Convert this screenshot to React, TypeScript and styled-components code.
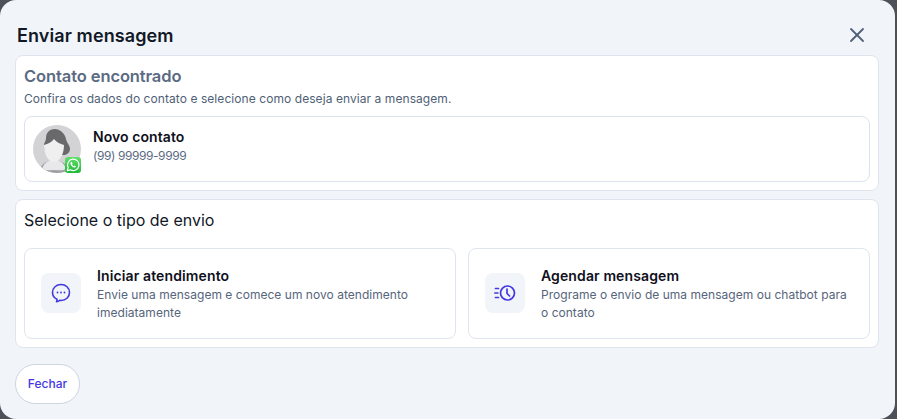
import React from 'react';
import styled, { createGlobalStyle } from 'styled-components';
import { X } from 'lucide-react';

const GlobalStyle = createGlobalStyle`
  html, body {
    margin: 0;
    height: 100%;
    background: #4c5058;
    overflow: hidden;
  }
  * {
    box-sizing: border-box;
  }
`;

const Modal = styled.div`
  width: 895px;
  height: 419px;
  background: #f1f4f9;
  border-radius: 16px;
  padding: 24px 16px 15px 15px;
  display: flex;
  flex-direction: column;
  font-family: 'Inter', 'Noto Sans', sans-serif;
`;

const Header = styled.header`
  height: 31px;
  display: flex;
  justify-content: space-between;
  align-items: flex-start;
  padding: 0 9px 0 2px;
`;

const Title = styled.h2`
  margin: 0;
  font-size: 18px;
  line-height: 23px;
  font-weight: 600;
  color: #111827;
  letter-spacing: 0.1px;
`;

const CloseButton = styled.button`
  border: 0;
  padding: 0;
  margin-right: 1px;
  margin-top: -1px;
  width: 24px;
  height: 24px;
  background: none;
  color: #4f6079;
  display: flex;
`;

const Card = styled.section<{ $height: number }>`
  height: ${p => p.$height}px;
  background: #fff;
  border: 1px solid #dfe5ee;
  border-radius: 8px;
  padding: 8px;
  margin-bottom: 8px;
`;

const CardTitle = styled.h3`
  margin: 1px 0 0;
  font-size: 16.5px;
  line-height: 22px;
  font-weight: 600;
  color: #5b6b82;
  letter-spacing: -0.1px;
`;

const CardText = styled.p`
  margin: 3px 0 0;
  font-size: 12px;
  line-height: 18px;
  color: #4f5f76;
  letter-spacing: 0.07px;
`;

const ContactBox = styled.div`
  height: 66px;
  margin-top: 8px;
  border: 1px solid #dde3ee;
  border-radius: 8px;
  padding: 8px;
  display: flex;
  align-items: center;
  gap: 12px;
`;

const AvatarWrap = styled.div`
  position: relative;
  width: 48px;
  height: 48px;
  flex: none;
`;

const Badge = styled.span`
  position: absolute;
  right: 0;
  bottom: 0;
  width: 16px;
  height: 16px;
  display: block;
`;

const ContactInfo = styled.div`
  margin-bottom: 6px;
`;

const Name = styled.div`
  font-size: 14px;
  line-height: 20px;
  font-weight: 600;
  color: #0f1020;
  letter-spacing: 0.07px;
`;

const Phone = styled.div`
  font-size: 12px;
  line-height: 17px;
  color: #5b6b82;
  letter-spacing: -0.42px;
`;

const SectionTitle = styled.h3`
  margin: 0;
  font-size: 16px;
  line-height: 24px;
  font-weight: 400;
  color: #111827;
`;

const Options = styled.div`
  display: grid;
  grid-template-columns: 432px 402px;
  gap: 12px;
  margin-top: 16px;
`;

const Option = styled.div`
  height: 91px;
  border: 1px solid #dfe5ee;
  border-radius: 8px;
  display: flex;
  align-items: center;
  padding: 0 16px;
  gap: 16px;
`;

const IconBox = styled.div`
  width: 40px;
  height: 40px;
  flex: none;
  border-radius: 8px;
  background: #f1f4f9;
  color: #4338e0;
  display: flex;
  align-items: center;
  justify-content: center;
`;

const OptionBody = styled.div`
  margin-top: 2px;
`;

const OptionTitle = styled.div`
  font-size: 14px;
  line-height: 19px;
  font-weight: 600;
  color: #0f1020;
  letter-spacing: 0.12px;
  margin-bottom: 1px;
`;

const OptionText = styled.div`
  font-size: 12px;
  line-height: 18px;
  color: #56657b;
  letter-spacing: 0.03px;
`;

const CloseAction = styled.button`
  width: 65px;
  height: 41px;
  margin-top: 8px;
  border: 1px solid #cdd5e1;
  border-radius: 21px;
  background: #fff;
  color: #4338e0;
  font: 500 12px 'Inter', sans-serif;
  padding: 0;
`;

function Avatar() {
  return (
    <svg width="48" height="48" viewBox="0 0 48 48">
      <defs>
        <clipPath id="face">
          <circle cx="24" cy="24" r="24" />
        </clipPath>
      </defs>
      <g clipPath="url(#face)">
        <rect width="48" height="48" fill="#d3d3d6" />
        <path d="M6 50c0-9 5-14 15-15 10 1 16 6 16 15z" fill="#9f9fa2" />
        <path d="M9 44c2-6 6-9 12-9s10 3 12 9c-3 2-7 1-12 1s-9 1-12-1z" fill="#e8e8ea" />
        <path d="M22 4c-6 0-9 4-9 9 0 2-1 4-2 6 0 4 1 8 3 11h18c3-1 5-3 5-6 0-3-2-5-3-7-1-2-1-4-2-6-2-4-6-7-10-7z" fill="#69696c" />
        <path d="M11 20c4-1 8-3 10-6 2 3 6 5 10 6 0 9-4 17-10 17-6 0-10-8-10-17z" fill="#efeff0" />
      </g>
    </svg>
  );
}

function WhatsappBadge() {
  return (
    <svg width="16" height="16" viewBox="0 0 16 16">
      <defs>
        <linearGradient id="wa" x1="0" y1="0" x2="0" y2="1">
          <stop offset="0" stopColor="#5fe06a" />
          <stop offset="1" stopColor="#22b838" />
        </linearGradient>
      </defs>
      <rect width="16" height="16" rx="3" fill="url(#wa)" />
      <path d="M2.300 13.700l.9-3.300A5.700 5.700 0 1 1 5.500 12.800z" fill="none" stroke="#fff" strokeWidth="1.200" strokeLinejoin="round" />
      <path d="M6.200 4.900c-.9.400-1 1.500-.5 2.600.6 1.300 1.700 2.400 3.100 2.900 1 .3 1.900 0 2.200-.9l-1.300-.9-.8.600c-.7-.3-1.400-1-1.800-1.700l.5-.8-.7-1.700z" fill="#fff" />
    </svg>
  );
}

function ChatIcon() {
  return (
    <svg width="20" height="20" viewBox="0 0 20 20" fill="none" stroke="currentColor" strokeWidth="1.600" strokeLinejoin="round">
      <path d="M10 1.500c4.700 0 8.500 3.400 8.500 8s-3.800 8-8.500 8c-.6 0-1 0-1.500-.1-.5.8-1.600 1.400-3 1.400.4-.8.6-1.600.5-2.600C3 14.800 1.500 12.300 1.500 9.500c0-4.600 3.800-8 8.500-8z" />
      <circle cx="6.500" cy="9.500" r=".9" fill="currentColor" stroke="none" />
      <circle cx="10" cy="9.500" r=".9" fill="currentColor" stroke="none" />
      <circle cx="13.500" cy="9.500" r=".9" fill="currentColor" stroke="none" />
    </svg>
  );
}

function ScheduleIcon() {
  return (
    <svg width="22" height="20" viewBox="0 0 22 20" fill="none" stroke="currentColor" strokeWidth="1.700" strokeLinecap="round" strokeLinejoin="round">
      <circle cx="13.500" cy="10" r="7" />
      <path d="M13 6v4.500l2.500 2.500" />
      <path d="M1.500 5.500h3M.8 10h3M1.500 14.500h3" />
    </svg>
  );
}

export default function App() {
  return (
    <>
      <GlobalStyle />
      <Modal>
        <Header>
          <Title>Enviar mensagem</Title>
          <CloseButton aria-label="Fechar">
            <X size={24} strokeWidth={1.8} />
          </CloseButton>
        </Header>
        <Card $height={136}>
          <CardTitle>Contato encontrado</CardTitle>
          <CardText>Confira os dados do contato e selecione como deseja enviar a mensagem.</CardText>
          <ContactBox>
            <AvatarWrap>
              <Avatar />
              <Badge>
                <WhatsappBadge />
              </Badge>
            </AvatarWrap>
            <ContactInfo>
              <Name>Novo contato</Name>
              <Phone>(99) 99999-9999</Phone>
            </ContactInfo>
          </ContactBox>
        </Card>
        <Card $height={149}>
          <SectionTitle>Selecione o tipo de envio</SectionTitle>
          <Options>
            <Option>
              <IconBox>
                <ChatIcon />
              </IconBox>
              <OptionBody>
                <OptionTitle>Iniciar atendimento</OptionTitle>
                <OptionText>Envie uma mensagem e comece um novo atendimento imediatamente</OptionText>
              </OptionBody>
            </Option>
            <Option>
              <IconBox>
                <ScheduleIcon />
              </IconBox>
              <OptionBody>
                <OptionTitle>Agendar mensagem</OptionTitle>
                <OptionText>Programe o envio de uma mensagem ou chatbot para o contato</OptionText>
              </OptionBody>
            </Option>
          </Options>
        </Card>
        <CloseAction>Fechar</CloseAction>
      </Modal>
    </>
  );
}
